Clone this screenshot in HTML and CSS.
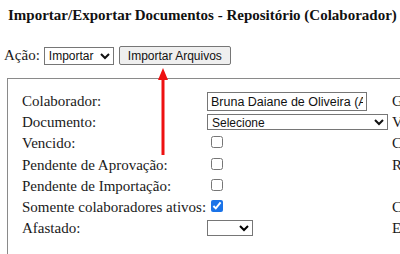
FILE: index.html
```html
<!DOCTYPE html>
<html lang="pt-BR">
<head>
  <meta charset="UTF-8">
  <title>Importar/Exportar Documentos</title>
  <link rel="stylesheet" href="styles.css">
</head>
<body>
  <div class="page-title">Importar/Exportar Documentos - Repositório (Colaborador) - Importar</div>

  <div class="acao-row">
    <label for="acao">Ação:</label>
    <select id="acao" class="acao-select">
      <option>Importar</option>
      <option>Exportar</option>
    </select>
    <button class="btn-importar">Importar Arquivos</button>
  </div>

  <div class="filtros">
    <table class="filtros-tabela">
      <tr>
        <td class="lbl">Colaborador:</td>
        <td class="campo"><input type="text" class="txt-colab" value="Bruna Daiane de Oliveira (Adm)"></td>
        <td class="lbl2">Grupo:</td>
      </tr>
      <tr>
        <td class="lbl">Documento:</td>
        <td class="campo"><select class="sel-doc"><option>Selecione</option></select></td>
        <td class="lbl2">Validade:</td>
      </tr>
      <tr>
        <td class="lbl">Vencido:</td>
        <td class="campo"><input type="checkbox" class="chk"></td>
        <td class="lbl2">Cargo:</td>
      </tr>
      <tr>
        <td class="lbl">Pendente de Aprovação:</td>
        <td class="campo"><input type="checkbox" class="chk"></td>
        <td class="lbl2">Recusado:</td>
      </tr>
      <tr>
        <td class="lbl">Pendente de Importação:</td>
        <td class="campo"><input type="checkbox" class="chk"></td>
        <td class="lbl2"></td>
      </tr>
      <tr>
        <td class="lbl">Somente colaboradores ativos:</td>
        <td class="campo"><input type="checkbox" class="chk" checked></td>
        <td class="lbl2">Centro:</td>
      </tr>
      <tr>
        <td class="lbl">Afastado:</td>
        <td class="campo"><select class="sel-afastado"><option></option><option>Sim</option><option>Não</option></select></td>
        <td class="lbl2">Empresa:</td>
      </tr>
    </table>
  </div>

  <svg class="seta" width="20" height="100" viewBox="0 0 20 100">
    <polygon points="10,0 5,12 15,12" fill="#ee1111"/>
    <rect x="8.5" y="10" width="3" height="77" fill="#ee1111"/>
  </svg>
</body>
</html>
```

FILE: styles.css
```css
body {
  margin: 0;
  font-family: 'Liberation Serif', 'Times New Roman', serif;
  font-size: 15px;
  color: #1a1a1a;
  background: #fff;
  overflow: hidden;
  position: relative;
  width: 400px;
  height: 254px;
}
.page-title {
  font-weight: bold;
  font-size: 15px;
  padding: 7px 0 0 8px;
  white-space: nowrap;
  color: #111;
}
.acao-row {
  display: flex;
  align-items: center;
  gap: 4px;
  margin: 22px 0 0 4px;
}
.acao-row label {
  font-size: 15px;
}
.acao-select {
  font-family: 'Liberation Sans', Arial, sans-serif;
  font-size: 12px;
  width: 70px;
  height: 18px;
  padding: 0;
  border: 1px solid #767676;
  border-radius: 0;
  background: #fff;
  color: #111;
}
.btn-importar {
  font-family: 'Liberation Sans', Arial, sans-serif;
  font-size: 12px;
  width: 112px;
  height: 19px;
  margin-left: 1px;
  padding: 0 6px;
  border: 1px solid #767676;
  border-radius: 2px;
  background: #efefef;
  color: #111;
}
.filtros {
  margin: 13px 0 0 7px;
  border: 1px solid #8a8a8a;
  border-right: none;
  border-bottom: none;
  padding: 12px 0 0 14px;
  height: 200px;
}
.filtros-tabela {
  border-collapse: collapse;
  table-layout: fixed;
  width: 460px;
}
.filtros-tabela td {
  padding: 0;
  height: 21.2px;
  white-space: nowrap;
  vertical-align: middle;
  overflow: hidden;
}
.lbl {
  width: 185px;
}
.campo {
  width: 185px;
}
.lbl2 {
  width: 90px;
}
.txt-colab {
  font-family: 'Liberation Sans', Arial, sans-serif;
  font-size: 12.5px;
  width: 152px;
  height: 15px;
  padding: 1px 3px;
  border: 1px solid #767676;
  border-radius: 0;
  color: #111;
}
.sel-doc {
  font-family: 'Liberation Sans', Arial, sans-serif;
  font-size: 12px;
  width: 181px;
  height: 16px;
  padding: 0;
  border: 1px solid #767676;
  border-radius: 0;
  background: #fff;
  color: #111;
}
.sel-afastado {
  width: 46px;
  height: 16px;
  padding: 0;
  border: 1px solid #767676;
  border-radius: 0;
  background: #fff;
}
.chk {
  margin: 0 0 0 4px;
  width: 12px;
  height: 12px;
  accent-color: #1a73e8;
}
.seta {
  position: absolute;
  left: 153px;
  top: 68px;
}
```
